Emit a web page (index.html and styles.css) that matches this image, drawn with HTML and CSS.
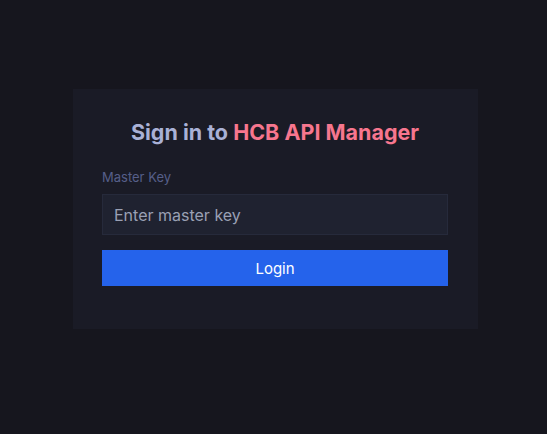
FILE: index.html
```html
<!DOCTYPE html>
<html lang="en">
<head>
<meta charset="utf-8">
<title>Sign in</title>
<link rel="stylesheet" href="styles.css">
</head>
<body>
<main class="page">
  <section class="card">
    <h1 class="title">Sign in to <span class="brand">HCB API Manager</span></h1>
    <form class="form">
      <label class="label" for="key">Master Key</label>
      <input class="input" id="key" type="password" placeholder="Enter master key">
      <button class="button" type="button">Login</button>
    </form>
  </section>
</main>
</body>
</html>
```
FILE: styles.css
```css
html, body {
  margin: 0;
  height: 100%;
  background: #16161e;
}
body {
  font-family: Inter, "Noto Sans", sans-serif;
}
.page {
  padding: 89px 0 0 73px;
}
.card {
  width: 405px;
  height: 240px;
  box-sizing: border-box;
  background: #1a1b26;
  padding: 29px 30px 0 29px;
}
.title {
  margin: 0;
  text-align: center;
  font-size: 21.5px;
  font-weight: 700;
  line-height: 28px;
  color: #a9b1d6;
}
.brand {
  color: #f7768e;
}
.form {
  display: flex;
  flex-direction: column;
  margin-top: 23px;
}
.label {
  font-size: 13px;
  line-height: 16px;
  color: #565f89;
  margin-bottom: 9px;
}
.input {
  height: 41px;
  box-sizing: border-box;
  background: #1f2230;
  border: 1px solid #262a3b;
  color: #c0caf5;
  font-family: inherit;
  font-size: 16px;
  padding: 0 11px;
  outline: none;
}
.input::placeholder {
  color: #9aa0b4;
}
.button {
  margin-top: 15px;
  height: 36px;
  border: none;
  background: #2563eb;
  color: #ffffff;
  font-family: inherit;
  font-size: 15px;
}
```
